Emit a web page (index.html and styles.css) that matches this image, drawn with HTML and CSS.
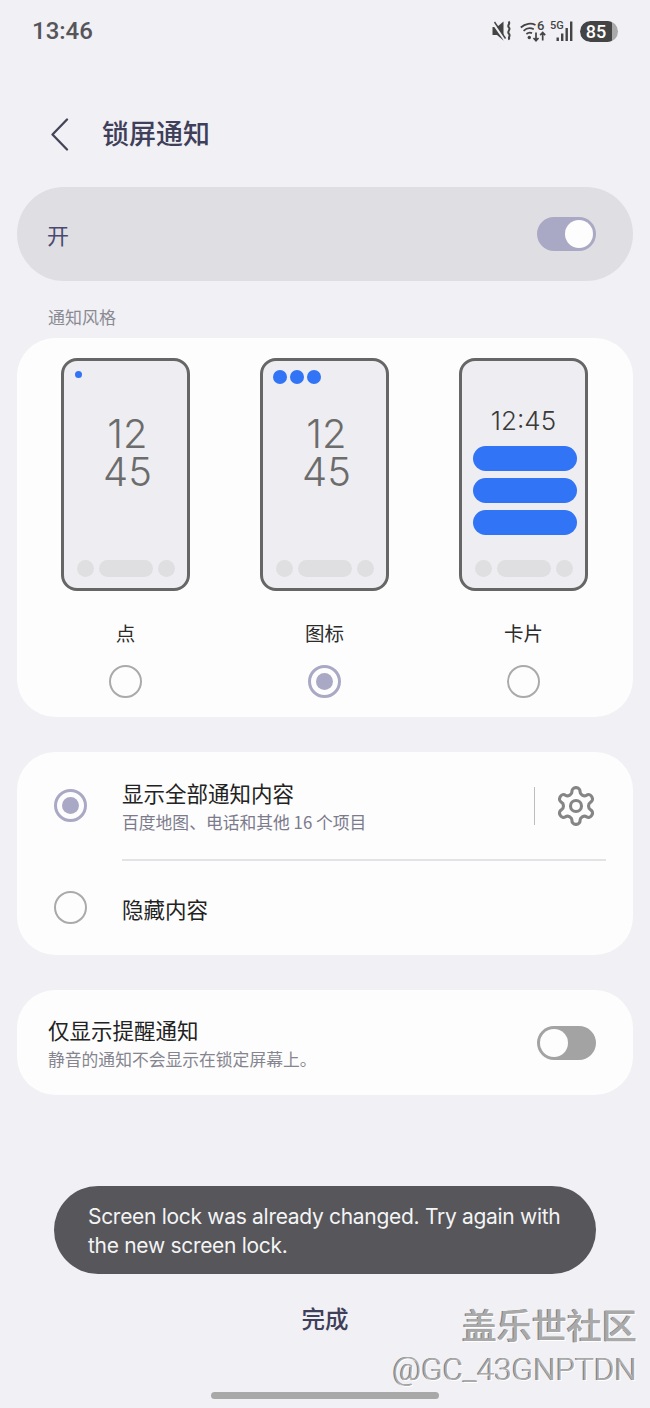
FILE: index.html
```html
<!DOCTYPE html>
<html lang="zh-CN">
<head>
    <meta charset="UTF-8">
    <meta name="viewport" content="width=device-width, initial-scale=1.0">
    <title>锁屏通知</title>
    <link rel="stylesheet" href="styles.css">
</head>
<body>

    <div class="page">

        <div class="status-bar">
            <span class="clock">13:46</span>
            <div class="status-icons">
                <svg class="icon-mute" width="20" height="22" viewBox="0 0 20 22">
                    <path d="M0.5 7h4.500l6.500-5.500v19l-6.500-5.500H0.500z" fill="#444"/>
                    <path d="M0.500 2.500l12 17" stroke="#f0f0f5" stroke-width="2.400"/>
                    <path d="M2.500 2l11 16.500" stroke="#444" stroke-width="1.400"/>
                    <path d="M16.500 1.500c2.600 2.200-2 3.800 0.400 6 2.400 2.200-2.400 4 0 6.200 2.200 2-1.400 3.600 0.600 6" fill="none" stroke="#444" stroke-width="2"/>
                </svg>
                <svg class="icon-wifi" width="26" height="24" viewBox="0 0 26 24">
                    <path d="M0.800 8.500c4.500-4.300 10.500-4.800 14.700-2.500" fill="none" stroke="#444" stroke-width="1.800"/>
                    <path d="M3.600 11.800c3-2.800 7-3.200 10.200-1.500" fill="none" stroke="#444" stroke-width="1.800"/>
                    <path d="M6.400 15c1.800-1.500 3.800-1.700 5.600-0.900" fill="none" stroke="#444" stroke-width="1.800"/>
                    <circle cx="9.300" cy="18.500" r="1.700" fill="#444"/>
                    <text x="17" y="10.500" class="status-text-wifi">6</text>
                    <path d="M16 13.500v8M13.500 19l2.500 2.700 2.500-2.700" fill="none" stroke="#444" stroke-width="1.700"/>
                    <path d="M22.700 21.500v-8M20.200 16.200l2.500-2.700 2.500 2.700" fill="none" stroke="#444" stroke-width="1.700"/>
                </svg>
                <svg class="icon-signal" width="26" height="24" viewBox="0 0 26 24">
                    <text x="0" y="9.500" class="status-text-5g">5G</text>
                    <rect x="6.500" y="18.500" width="2.400" height="3.500" fill="#444"/>
                    <rect x="11" y="14.500" width="2.400" height="7.500" fill="#444"/>
                    <rect x="15.500" y="9" width="2.400" height="13" fill="#444"/>
                    <rect x="20" y="2.500" width="2.400" height="19.500" fill="#444"/>
                </svg>
                <div class="battery"><span class="battery-level">85</span></div>
            </div>
        </div>

        <div class="header">
            <svg class="back-icon" width="20" height="33" viewBox="0 0 20 33">
                <path d="M17 1.500L2.500 16.500 17 31.500" fill="none" stroke="#444458" stroke-width="2.300" stroke-linecap="round" stroke-linejoin="round"/>
            </svg>
            <h1 class="title">锁屏通知</h1>
        </div>

        <div class="card master-row">
            <span class="master-label">开</span>
            <div class="toggle toggle-on"><span class="knob"></span></div>
        </div>

        <div class="section-label">通知风格</div>

        <div class="card styles-card">
            <div class="style-option">
                <div class="phone">
                    <div class="notif-icons"><span class="dot-small"></span></div>
                    <div class="big-clock">12<br>45</div>
                    <div class="dock"><span></span><span class="dock-wide"></span><span></span></div>
                </div>
                <div class="option-name">点</div>
                <span class="radio"></span>
            </div>
            <div class="style-option">
                <div class="phone">
                    <div class="notif-icons"><span class="dot"></span><span class="dot"></span><span class="dot"></span></div>
                    <div class="big-clock">12<br>45</div>
                    <div class="dock"><span></span><span class="dock-wide"></span><span></span></div>
                </div>
                <div class="option-name">图标</div>
                <span class="radio radio-on"></span>
            </div>
            <div class="style-option">
                <div class="phone">
                    <div class="line-clock">12:45</div>
                    <div class="notif-card"></div>
                    <div class="notif-card"></div>
                    <div class="notif-card"></div>
                    <div class="dock"><span></span><span class="dock-wide"></span><span></span></div>
                </div>
                <div class="option-name">卡片</div>
                <span class="radio"></span>
            </div>
        </div>

        <div class="card content-card">
            <div class="content-row content-row-first">
                <span class="radio radio-on"></span>
                <div class="row-text">
                    <div class="row-title">显示全部通知内容</div>
                    <div class="row-sub">百度地图、电话和其他 16 个项目</div>
                </div>
                <span class="v-line"></span>
                <svg class="gear" width="44" height="44" viewBox="0 0 24 24" fill="none" stroke="#858585" stroke-width="1.700" stroke-linejoin="round">
                    <path d="M12.220 2h-.44a2 2 0 0 0-2 2v.18a2 2 0 0 1-1 1.730l-.43.25a2 2 0 0 1-2 0l-.15-.08a2 2 0 0 0-2.730.73l-.22.38a2 2 0 0 0 .73 2.730l.15.1a2 2 0 0 1 1 1.720v.51a2 2 0 0 1-1 1.740l-.15.09a2 2 0 0 0-.73 2.730l.22.38a2 2 0 0 0 2.730.73l.15-.08a2 2 0 0 1 2 0l.43.25a2 2 0 0 1 1 1.730V20a2 2 0 0 0 2 2h.44a2 2 0 0 0 2-2v-.18a2 2 0 0 1 1-1.730l.43-.25a2 2 0 0 1 2 0l.15.08a2 2 0 0 0 2.730-.73l.22-.39a2 2 0 0 0-.73-2.730l-.15-.08a2 2 0 0 1-1-1.740v-.5a2 2 0 0 1 1-1.740l.15-.09a2 2 0 0 0 .73-2.730l-.22-.38a2 2 0 0 0-2.730-.73l-.15.08a2 2 0 0 1-2 0l-.43-.25a2 2 0 0 1-1-1.730V4a2 2 0 0 0-2-2z"/>
                    <circle cx="12" cy="12" r="3"/>
                </svg>
            </div>
            <div class="divider"></div>
            <div class="content-row content-row-second">
                <span class="radio radio-up"></span>
                <div class="row-title">隐藏内容</div>
            </div>
        </div>

        <div class="card alert-card">
            <div>
                <div class="row-title">仅显示提醒通知</div>
                <div class="row-sub alert-sub">静音的通知不会显示在锁定屏幕上。</div>
            </div>
            <div class="toggle toggle-off"><span class="knob"></span></div>
        </div>

        <div class="done">完成</div>
        <div class="home-bar"></div>

        <div class="toast">Screen lock was already changed. Try again with the new screen lock.</div>

        <div class="watermark">
            <div class="watermark-name">盖乐世社区</div>
            <div class="watermark-user">@GC_43GNPTDN</div>
        </div>

    </div>

</body>
</html>
```

FILE: styles.css
```css
* {
    box-sizing: border-box;
}
body {
    margin: 0;
    background-color: #f0f0f5;
    font-family: "Noto Sans CJK SC", "Noto Sans", sans-serif;
}
.page {
    position: relative;
    display: flex;
    flex-direction: column;
    width: 650px;
    height: 1408px;
    overflow: hidden;
}

/* status bar */
.status-bar {
    display: flex;
    align-items: center;
    justify-content: space-between;
    height: 62px;
    padding: 0 32px;
}
.clock {
    font-family: Roboto, sans-serif;
    font-size: 24px;
    font-weight: 500;
    color: #55555a;
}
.status-icons {
    display: flex;
    align-items: center;
}
.icon-mute {
    margin-right: 8px;
}
.icon-wifi {
    margin-right: 4px;
}
.icon-signal {
    margin-right: 4px;
}
.status-text-wifi {
    font-family: Roboto, sans-serif;
    font-size: 13px;
    font-weight: 500;
    fill: #444;
}
.status-text-5g {
    font-family: Roboto, sans-serif;
    font-size: 11px;
    font-weight: 500;
    fill: #444;
}
.battery {
    width: 38px;
    height: 21px;
    border-radius: 11px;
    background-color: #a9a9a9;
    overflow: hidden;
}
.battery-level {
    display: block;
    width: 32px;
    height: 21px;
    border-radius: 11px 3px 3px 11px;
    background-color: #444;
    color: white;
    font-family: Roboto, sans-serif;
    font-size: 18px;
    font-weight: 500;
    line-height: 21px;
    text-align: center;
}

/* header */
.header {
    display: flex;
    align-items: center;
    height: 50px;
    margin-top: 47px;
    padding-left: 50px;
}
.back-icon {
    margin-right: 32px;
}
.title {
    margin: -4px 0 0;
    font-size: 27px;
    font-weight: 500;
    color: #3f3f5a;
}

/* cards */
.card {
    width: 616px;
    margin-left: 17px;
    background-color: #fdfdfd;
    border-radius: 38px;
}
.master-row {
    display: flex;
    align-items: center;
    justify-content: space-between;
    height: 94px;
    margin-top: 28px;
    padding: 0 37px 0 30px;
    background-color: #dedee3;
    border-radius: 47px;
}
.master-label {
    font-size: 22px;
    color: #4a4a70;
}
.toggle {
    position: relative;
    width: 59px;
    height: 34px;
    border-radius: 17px;
}
.toggle-on {
    background-color: #a9a9c5;
}
.toggle-off {
    background-color: #a3a3a3;
}
.knob {
    position: absolute;
    top: 3px;
    width: 28px;
    height: 28px;
    border-radius: 50%;
    background-color: #fdfdfd;
}
.toggle-on .knob {
    right: 3px;
}
.toggle-off .knob {
    left: 3px;
}
.section-label {
    height: 22px;
    margin-top: 25px;
    margin-left: 48px;
    font-size: 17px;
    line-height: 22px;
    color: #8a8a92;
}

/* notification style picker */
.styles-card {
    display: flex;
    justify-content: space-between;
    height: 379px;
    margin-top: 10px;
    padding: 20px 45px 0 44px;
}
.style-option {
    display: flex;
    flex-direction: column;
    align-items: center;
    width: 129px;
}
.phone {
    display: flex;
    flex-direction: column;
    width: 129px;
    height: 233px;
    border: 3px solid #666;
    border-radius: 16px;
    background-color: #eeeef2;
}
.notif-icons {
    display: flex;
    gap: 3px;
    height: 14px;
    margin-top: 9px;
    padding-left: 10px;
}
.dot {
    width: 14px;
    height: 14px;
    border-radius: 50%;
    background-color: #3174f6;
}
.dot-small {
    width: 7px;
    height: 7px;
    margin-left: 1px;
    margin-top: 1px;
    border-radius: 50%;
    background-color: #3174f6;
}
.big-clock {
    margin-top: 31px;
    padding-left: 4px;
    font-family: Inter, sans-serif;
    font-size: 40px;
    font-weight: 300;
    line-height: 38px;
    text-align: center;
    color: #6c6c6c;
}
.line-clock {
    margin-top: 41px;
    font-family: Inter, sans-serif;
    font-size: 26px;
    font-weight: 300;
    line-height: 38px;
    text-align: center;
    color: #3a3a3a;
}
.notif-card {
    width: 104px;
    height: 25px;
    margin: 7px 0 0 11px;
    border-radius: 13px;
    background-color: #3174f6;
}
.line-clock + .notif-card {
    margin-top: 6px;
}
.dock {
    display: flex;
    gap: 5px;
    margin-top: auto;
    padding: 0 0 11px 13px;
}
.dock span {
    width: 17px;
    height: 17px;
    border-radius: 50%;
    background-color: #dfdfe1;
}
.dock .dock-wide {
    width: 54px;
    border-radius: 9px;
}
.option-name {
    margin-top: 29px;
    font-size: 19.500px;
    line-height: 26px;
    color: #2b2b2b;
}
.radio {
    display: block;
    flex-shrink: 0;
    width: 33px;
    height: 33px;
    border: 2px solid #aaa;
    border-radius: 50%;
    background-color: transparent;
}
.option-name + .radio {
    margin-top: 19px;
}
.radio-on {
    position: relative;
    border: 3px solid #a9a9c5;
}
.radio-on::after {
    content: "";
    position: absolute;
    top: 5px;
    left: 5px;
    width: 17px;
    height: 17px;
    border-radius: 50%;
    background-color: #a9a9c5;
}
.radio-up {
    margin-top: -3px;
}

/* content rows */
.content-card {
    height: 203px;
    margin-top: 35px;
}
.content-row {
    display: flex;
    align-items: center;
    padding-left: 37px;
}
.content-row-first {
    height: 107px;
}
.content-row-second {
    height: 96px;
}
.row-text {
    flex: 1;
}
.row-title {
    font-size: 21.500px;
    line-height: 30px;
    color: #222;
}
.row-sub {
    margin-top: 2px;
    font-size: 16.800px;
    line-height: 24px;
    color: #7b7b8c;
}
.content-row .row-title,
.content-row .row-text {
    margin-left: 35px;
}
.content-row .row-text .row-title {
    margin-left: 0;
}
.v-line {
    width: 1px;
    height: 38px;
    background-color: #bdbdbd;
}
.gear {
    margin: 0 35px 0 19px;
}
.divider {
    height: 2px;
    margin: 0 27px 0 105px;
    background-color: #e3e3e6;
}

/* alert only row */
.alert-card {
    display: flex;
    align-items: center;
    justify-content: space-between;
    height: 105px;
    margin-top: 35px;
    padding: 0 37px 0 31px;
}
.alert-sub {
    color: #85858f;
}

/* bottom */
.done {
    margin-top: 206px;
    font-size: 23.500px;
    font-weight: 500;
    line-height: 34px;
    text-align: center;
    color: #3f3f5a;
}
.home-bar {
    width: 228px;
    height: 7px;
    margin: 57px 0 0 211px;
    border-radius: 4px;
    background-color: #a8a8a8;
}

/* overlays */
.toast {
    position: absolute;
    top: 1186px;
    left: 54px;
    width: 542px;
    height: 88px;
    padding: 16px 34px;
    border-radius: 44px;
    background-color: #56565b;
    color: #f4f4f4;
    font-family: Inter, sans-serif;
    font-size: 21px;
    letter-spacing: -0.3px;
    line-height: 29px;
}
.watermark {
    position: absolute;
    top: 1299px;
    right: 13px;
    text-align: right;
    color: #a9a9a9;
    text-shadow: 1px 1px 0 #fff, -1px 0 0 #7a7a7a;
}
.watermark-name {
    font-size: 35px;
    font-weight: 500;
    line-height: 50px;
}
.watermark-user {
    font-family: Roboto, sans-serif;
    font-size: 31.500px;
    font-weight: 300;
    line-height: 42px;
}
```
